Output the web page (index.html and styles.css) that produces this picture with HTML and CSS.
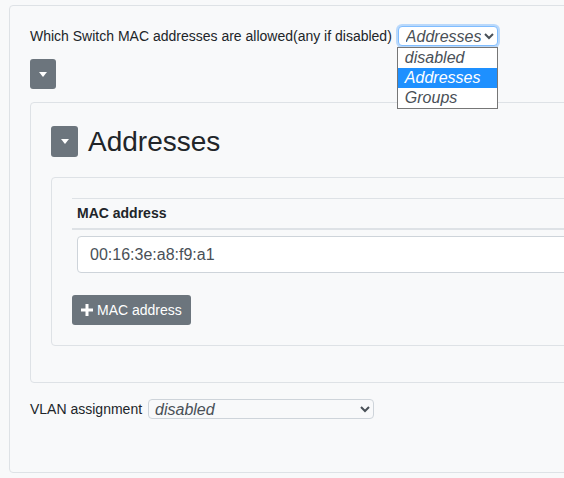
FILE: index.html
```html
<!DOCTYPE html>
<html>
<head>
<meta charset="utf-8">
<link rel="stylesheet" href="styles.css">
</head>
<body>
<div class="page">
  <div class="card outer">
    <div class="field-row">
      <label class="field-label">Which Switch MAC addresses are allowed(any if disabled)</label>
      <div class="select-wrap">
        <select class="sel sel-focus">
          <option>disabled</option>
          <option selected>Addresses</option>
          <option>Groups</option>
        </select>
        <div class="menu">
          <div class="menu-item">disabled</div>
          <div class="menu-item active">Addresses</div>
          <div class="menu-item">Groups</div>
        </div>
      </div>
    </div>
    <button class="toggle"><span class="caret"></span></button>
    <div class="card inner">
      <div class="heading-row">
        <button class="toggle toggle-lg"><span class="caret"></span></button>
        <h2 class="heading">Addresses</h2>
      </div>
      <div class="card list">
        <table class="tbl">
          <thead><tr><th>MAC address</th></tr></thead>
          <tbody><tr><td><input class="text-input" type="text" value="00:16:3e:a8:f9:a1"></td></tr></tbody>
        </table>
        <button class="add-btn"><svg class="plus" width="12" height="12" viewBox="0 0 12 12"><path d="M4.5 0h3v4.5H12v3H7.5V12h-3V7.5H0v-3h4.5z" fill="#fff"/></svg>MAC address</button>
      </div>
    </div>
    <div class="field-row vlan-row">
      <label class="field-label">VLAN assignment</label>
      <select class="sel sel-wide">
        <option selected>disabled</option>
      </select>
    </div>
  </div>
</div>
</body>
</html>
```
FILE: styles.css
```css
html, body {
  margin: 0;
  padding: 0;
  overflow: hidden;
  background: #f8f9fa;
}
body {
  font-family: "Liberation Sans", Arial, sans-serif;
  font-size: 14px;
  color: #212529;
}
.page {
  padding: 5px 0 0 9px;
  width: 720px;
}
.card {
  border: 1px solid #dee2e6;
  border-radius: 4px;
  background: #f8f9fa;
}
.outer {
  padding: 20px 20px 53px 20px;
}
.field-row {
  display: flex;
  align-items: center;
  gap: 6px;
  height: 20px;
}
.field-label {
  line-height: 20px;
}
.select-wrap {
  position: relative;
}
.sel {
  font-family: inherit;
  font-size: 16px;
  font-style: italic;
  color: #495057;
  height: 20px;
  padding: 0;
  border: 1px solid #ced4da;
  border-radius: 4px;
  background: #fff;
  margin: 0;
}
.sel-focus {
  border-color: #80bdff;
  box-shadow: 0 0 0 2px rgba(0, 123, 255, 0.25);
  outline: none;
  width: 100px;
  padding-left: 3px;
}
.sel-wide {
  width: 226px;
  background: #f8f9fa;
  padding-left: 2px;
}
.menu {
  position: absolute;
  left: -1px;
  top: 21px;
  width: 99px;
  background: #fff;
  border: 1px solid #767676;
  padding: 0;
  z-index: 5;
}
.menu-item {
  font-size: 16px;
  font-style: italic;
  color: #495057;
  height: 20px;
  line-height: 19px;
  padding-left: 7px;
}
.menu-item.active {
  background: #1e90ff;
  color: #fff;
}
.toggle {
  display: flex;
  align-items: center;
  justify-content: center;
  width: 26px;
  height: 30px;
  margin: 13px 0 13px 0;
  padding: 0;
  border: none;
  border-radius: 3px;
  background: #6c757d;
}
.caret {
  width: 0;
  height: 0;
  border-left: 4px solid transparent;
  border-right: 4px solid transparent;
  border-top: 5px solid #fff;
}
.inner {
  padding: 23px 20px 36px 20px;
}
.heading-row {
  display: flex;
  align-items: center;
  gap: 10px;
}
.toggle-lg {
  width: 27px;
  height: 31px;
  margin: 0;
}
.heading {
  margin: 0;
  font-size: 28px;
  font-weight: 400;
  line-height: 31px;
}
.list {
  margin-top: 20px;
  padding: 20px 20px 20px 20px;
}
.tbl {
  width: 100%;
  border-collapse: collapse;
}
.tbl th {
  text-align: left;
  font-weight: 700;
  font-size: 14px;
  line-height: 21px;
  padding: 4px 5px 4px 5px;
  border-top: 1px solid #dee2e6;
  border-bottom: 2px solid #dee2e6;
}
.tbl td {
  padding: 6px 0 6px 5px;
}
.text-input {
  box-sizing: border-box;
  display: block;
  width: 100%;
  height: 37px;
  padding: 6px 12px;
  font-family: inherit;
  font-size: 16px;
  color: #495057;
  background: #fff;
  border: 1px solid #ced4da;
  border-radius: 4px;
  margin: 0;
}
.add-btn {
  display: flex;
  align-items: center;
  gap: 4px;
  margin-top: 16px;
  height: 30px;
  padding: 0 9px 0 9px;
  font-family: inherit;
  font-size: 14px;
  color: #fff;
  background: #6c757d;
  border: none;
  border-radius: 3px;
}
.plus {
  display: block;
}
.vlan-row {
  margin-top: 16px;
}
```
